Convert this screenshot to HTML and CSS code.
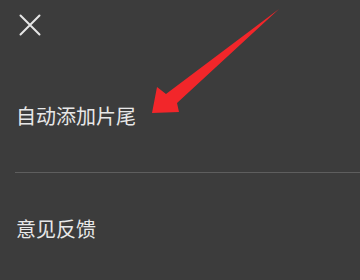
FILE: index.html
```html
<!DOCTYPE html>
<html lang="zh">
<head>
<meta charset="utf-8">
<link rel="stylesheet" href="styles.css">
</head>
<body>
<div class="page">
  <div class="top">
    <svg class="close" width="22" height="22" viewBox="0 0 22 22">
      <path d="M1.5 1.5 L20.5 20.5 M20.5 1.5 L1.5 20.5" stroke="#e6e6e6" stroke-width="2" stroke-linecap="round" fill="none"/>
    </svg>
  </div>
  <div class="item">自动添加片尾</div>
  <div class="item divided">意见反馈</div>
  <svg class="arrow" width="360" height="280" viewBox="0 0 360 280">
    <polygon points="152,113 157,87 166,94 279,9 177,103 179,112" fill="#f2262a"/>
  </svg>
</div>
</body>
</html>
```
FILE: styles.css
```css
html, body {
  margin: 0;
  padding: 0;
  background: #3c3c3c;
}
.page {
  position: relative;
  width: 360px;
  height: 280px;
  overflow: hidden;
  font-family: "Noto Sans CJK SC", "Noto Sans", sans-serif;
  color: #e8e8e8;
}
.top {
  height: 60px;
  padding: 14px 0 0 19px;
  box-sizing: border-box;
}
.close {
  display: block;
}
.item {
  height: 112px;
  line-height: 112px;
  font-size: 20px;
  padding-left: 16px;
  box-sizing: border-box;
}
.divided {
  margin-left: 15px;
  padding-left: 1px;
  border-top: 1px solid #5e5e5e;
}
.arrow {
  position: absolute;
  left: 0;
  top: 0;
}
```
